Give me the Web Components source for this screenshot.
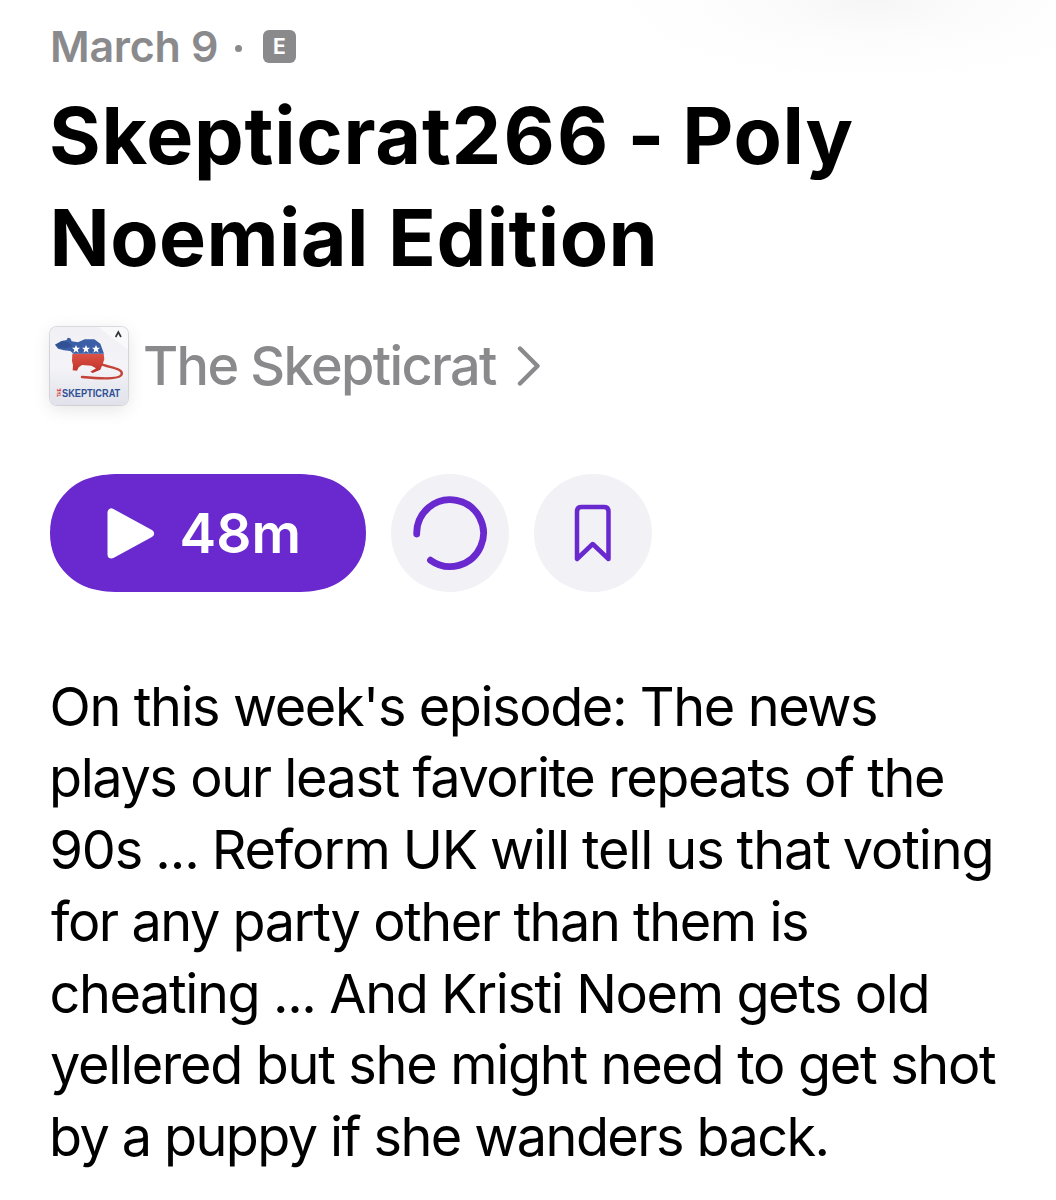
<!DOCTYPE html>
<html lang="en">
<head>
<meta charset="utf-8">
<title>The Skepticrat</title>
<style>
body{margin:0;background:#fff;font-family:Inter,"Liberation Sans",sans-serif}
.digits{letter-spacing:calc(var(--track) + 1.500px)}
</style>
</head>
<body>
<episode-page>
  <episode-meta slot="meta"></episode-meta>
  <episode-title slot="title">
    <ink-line from="2" to="802.5" word="-2.5" extra="4.5">Skepticrat<span class="digits">266</span> - Poly</ink-line>
    <ink-line from="4.5" to="603.5">Noemial Edition</ink-line>
  </episode-title>
  <show-link slot="show"><ink-line from="17" to="369">The Skepticrat</ink-line></show-link>
  <episode-actions slot="actions"></episode-actions>
  <episode-notes slot="notes">
    <ink-line from="2.5" to="826">On this week's episode: The news</ink-line>
    <ink-line from="3" to="893">plays our least favorite repeats of the</ink-line>
    <ink-line from="2.5" to="940.5" word="-1">90s ... Reform UK will tell us that voting</ink-line>
    <ink-line from="1" to="757">for any party other than them is</ink-line>
    <ink-line from="1.5" to="876.5">cheating ... And Kristi Noem gets old</ink-line>
    <ink-line from="1" to="946">yellered but she might need to get shot</ink-line>
    <ink-line from="3" to="776.5">by a puppy if she wanders back.</ink-line>
  </episode-notes>
</episode-page>
<script>
function component(name, html, extra) {
  const t = document.createElement('template');
  t.innerHTML = html;
  customElements.define(name, class extends HTMLElement {
    constructor() {
      super();
      this.attachShadow({mode: 'open'}).append(t.content.cloneNode(true));
    }
    connectedCallback() { if (extra) extra(this); }
  });
}

component('episode-page', `
<style>
:host{display:flex;flex-direction:column;box-sizing:border-box;width:1056px;height:1200px;overflow:hidden;padding:21px 0 0 50px;
background:radial-gradient(ellipse 250px 78px at 872px 0,#f6f6f6 0,#f9f9f9 22%,#fbfbfb 38%,#fdfdfd 60%,#fefefe 88%,#fff 100%),radial-gradient(ellipse 190px 60px at 90px 0,#fafafa 0,#fcfcfc 40%,#fefefe 75%,#fff 100%),#fff}
.title{margin-top:12.500px}
.show{margin-top:39.500px}
.actions{margin-top:69px}
.notes{margin-top:78.500px}
</style>
<slot name="meta"></slot>
<div class="title"><slot name="title"></slot></div>
<div class="show"><slot name="show"></slot></div>
<div class="actions"><slot name="actions"></slot></div>
<div class="notes"><slot name="notes"></slot></div>`);

component('episode-meta', `
<style>
:host{display:flex;height:50px;line-height:50px;font-size:43px;font-weight:560;color:#8a8a8d}
.date{width:185px}
.dot{width:7px;height:7px;border-radius:50%;background:currentColor;margin:24px 21px 0 0}
.badge{width:33px;height:33px;margin-top:9px;border-radius:6px;background:#8a8a8d;color:#fff;font-size:21px;line-height:33px;font-weight:750;text-align:center}
</style>
<ink-line class="date" from="3" to="167">March 9</ink-line>
<span class="dot"></span>
<span class="badge">E</span>`);

component('episode-title', `
<style>:host{display:block;font-size:79px;line-height:102px;font-weight:700;color:#000}</style><slot></slot>`);

component('episode-notes', `
<style>:host{display:block;font-size:54px;line-height:71.75px;font-weight:430;color:#000}</style><slot></slot>`);

component('show-link', `
<style>
:host{display:flex;height:78px;line-height:78px;font-size:54px;font-weight:450;color:#8a8a8d}
.name{width:389px}
svg{display:block;margin-top:17px}
</style>
<show-artwork></show-artwork><div class="name"><slot></slot></div>
<svg width="26" height="44" viewBox="0 0 26 44" fill="none" stroke="currentColor" stroke-width="4.4" stroke-linecap="round" stroke-linejoin="round"><path d="M3 4.500 20.500 22 3 39.500"/></svg>`);

component('show-artwork', `
<style>
:host{display:block;width:78px;height:78px;border-radius:7px;box-shadow:0 4px 18px rgba(0,0,0,.11),0 0 0 1px #e0e0e4}
svg{display:block;overflow:visible}
</style>
<svg width="78" height="78" viewBox="0 0 234 234">
<defs><linearGradient id="g" x1="0" y1="0" x2="0" y2="1"><stop offset="0" stop-color="#f1f1f5"/><stop offset=".5" stop-color="#f4f4f8"/><stop offset="1" stop-color="#e0e1ea"/></linearGradient>
<linearGradient id="r" x1="0" y1="0" x2="0" y2="1"><stop offset="0" stop-color="#dc5246"/><stop offset="1" stop-color="#be3028"/></linearGradient></defs>
<rect width="234" height="234" rx="21" fill="url(#g)"/>
<path d="M145 0H213A21 21 0 0 1 234 21V68Z" fill="#f9f9fb"/>
<path d="M197 30 205 15 213 30" fill="none" stroke="#333" stroke-width="5"/>
<path d="M150 110C176 122 221 124 215 142C210 157 158 156 96 150" fill="none" stroke="#c64239" stroke-width="7" stroke-linecap="round"/>
<path d="M67 80H161L163 96 158 112 151 128 128 138 121 134 138 124 124 116 96 114 86 121 81 131 68 130 69 115 66 102Z" fill="url(#r)"/>
<path d="M15 53 34 42 50 39 53 32 61 34 65 43 84 46 104 37 133 37 151 50 162 80H70L61 72 42 70 24 65Z" fill="#3b5fa7"/>
<path d="M16 53 36 43 52 44 67 57 48 63 28 62Z" fill="#315192"/>
<g fill="#fff"><path id="s" d="M78 54 81.500 62 90 62 83 68 86 77 78 72 70 77 73 68 66 62 74.500 62Z"/><use href="#s" x="30"/><use href="#s" x="60"/></g>
<text transform="translate(36 209) scale(.84 1)" font-family="Liberation Sans" font-size="33" font-weight="700" fill="#304f93">SKEPTICRAT</text>
<text transform="translate(33 210) rotate(-90) scale(.75 1)" font-family="Liberation Sans" font-size="17" font-weight="700" fill="#cf4038">THE</text>
</svg>`);

component('episode-actions', `
<style>:host{display:flex;gap:25px;height:118px}</style>
<play-button></play-button>
<round-button><svg width="118" height="118" fill="none" stroke="#6929ce" stroke-width="6.800" stroke-linecap="round"><path d="M25.700 60A33.400 33.400 0 1 1 39.500 86.200"/></svg></round-button>
<round-button><svg width="118" height="118" fill="none" stroke="#6929ce" stroke-width="4.500" stroke-linecap="round" stroke-linejoin="round"><path d="M43 85V37.500Q43 33 47.500 33H70Q74.500 33 74.500 37.500V85L58.700 70Z"/></svg></round-button>`);

component('round-button', `
<style>:host{display:block;width:118px;height:118px;border-radius:50%;background:#f1f1f6}::slotted(svg){display:block}</style><slot></slot>`);

component('play-button', `
<style>
:host{display:grid;width:316px;height:118px;color:#fff;font-size:55px;font-weight:580;line-height:118px}
svg,.label{grid-area:1/1}
</style>
<svg width="316" height="118"><path d="M0 59C0 42 6 28 17.300 17.300C29 6 44 0 70 0H246C272 0 287 6 298.700 17.300C310 28 316 42 316 59S310 90 298.700 100.700C287 112 272 118 246 118H70C44 118 29 112 17.300 100.700C6 90 0 76 0 59Z" fill="#6929ce"/>
<path d="M61.500 38.500V80.500L100 59.500Z" fill="#fff" stroke="#fff" stroke-width="8" stroke-linejoin="round"/></svg>
<ink-line class="label" from="131.500" to="247.500">48m</ink-line>`);

/* One text line whose glyphs span exactly from..to within its box.
   "word" adds to each space and "extra" is the width that .digits add;
   the letters take up the difference. */
component('ink-line', `<style>:host{display:block;white-space:nowrap}.run{display:inline-block}</style><span class="run"><slot></slot></span>`, el => {
  const text = el.textContent.trim(), span = el.shadowRoot.querySelector('.run'), cs = getComputedStyle(el);
  const ctx = document.createElement('canvas').getContext('2d');
  ctx.font = cs.fontWeight + ' ' + cs.fontSize + ' ' + cs.fontFamily;
  const m = ctx.measureText(text), from = +el.getAttribute('from'), to = +el.getAttribute('to');
  const word = +(el.getAttribute('word') || 0), extra = +(el.getAttribute('extra') || 0);
  const ink = m.actualBoundingBoxRight + m.actualBoundingBoxLeft + word * (text.split(' ').length - 1) + extra;
  const track = (to - from - ink) / (text.length - 1) + 'px';
  el.style.setProperty('--track', track);
  span.style.wordSpacing = word + 'px';
  span.style.letterSpacing = track;
  span.style.marginLeft = from + m.actualBoundingBoxLeft + 'px';
});
</script>
</body>
</html>
